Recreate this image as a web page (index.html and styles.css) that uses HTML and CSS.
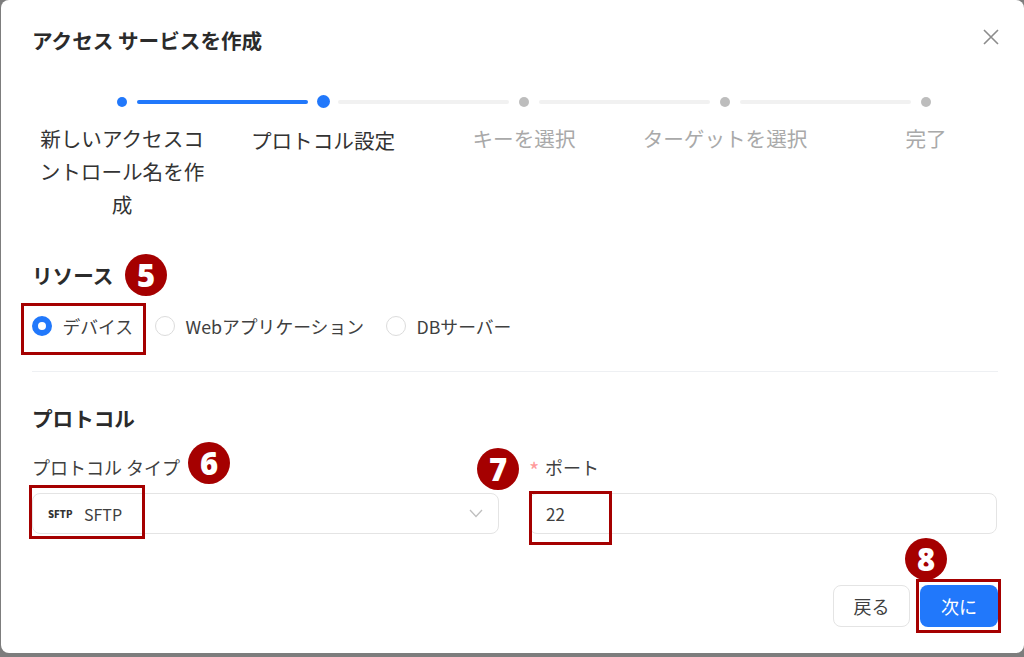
FILE: index.html
```html
<!DOCTYPE html>
<html lang="ja">
<head>
    <meta charset="utf-8">
    <title>アクセス サービスを作成</title>
    <link rel="stylesheet" href="styles.css">
</head>
<body>
    <div class="modal">
        <header class="modal-head">
            <h1>アクセス サービスを作成</h1>
            <svg class="close" width="18" height="18" viewBox="0 0 18 18"><path d="M2 2l14 14M16 2L2 16" fill="none" stroke="#8c8c8c" stroke-width="1.6"/></svg>
        </header>

        <div class="track">
            <span class="dot done"></span><span class="line done"></span>
            <span class="dot current"></span><span class="line"></span>
            <span class="dot"></span><span class="line"></span>
            <span class="dot"></span><span class="line"></span>
            <span class="dot"></span>
        </div>
        <div class="steps">
            <div class="step">新しいアクセスコントロール名を作成</div>
            <div class="step current">プロトコル設定</div>
            <div class="step todo">キーを選択</div>
            <div class="step todo">ターゲットを選択</div>
            <div class="step todo">完了</div>
        </div>

        <h2 class="section-title">リソース</h2>
        <div class="radios">
            <label class="radio checked"><span class="radio-mark"></span>デバイス</label>
            <label class="radio"><span class="radio-mark"></span>Webアプリケーション</label>
            <label class="radio"><span class="radio-mark"></span>DBサーバー</label>
        </div>
        <div class="divider"></div>

        <h2 class="section-title second">プロトコル</h2>
        <div class="fields">
            <div class="field">
                <div class="field-label">プロトコル タイプ</div>
                <div class="control">
                    <span class="proto-logo">SFTP</span>
                    <span class="proto-name">SFTP</span>
                    <svg class="chevron" width="14" height="9" viewBox="0 0 14 9"><path d="M1 1l6 6.5L13 1" fill="none" stroke="#bfbfbf" stroke-width="1.3"/></svg>
                </div>
            </div>
            <div class="field">
                <div class="field-label"><span class="required">*</span>ポート</div>
                <div class="control port">22</div>
            </div>
        </div>

        <footer class="modal-foot">
            <button class="btn back">戻る</button>
            <button class="btn primary">次に</button>
        </footer>
    </div>

    <!-- annotations on top of the screenshot -->
    <div class="mark mark-device"></div>
    <div class="mark mark-proto"></div>
    <div class="mark mark-port"></div>
    <div class="mark mark-next"></div>
    <div class="badge badge-5">5</div>
    <div class="badge badge-6">6</div>
    <div class="badge badge-7">7</div>
    <div class="badge badge-8">8</div>
</body>
</html>
```

FILE: styles.css
```css
* { box-sizing: border-box; }
body { position: relative; width: 1024px; height: 657px; margin: 0; overflow: hidden; background: #7d7d7d; color: #333; font-family: "Noto Sans CJK JP", "Noto Sans", sans-serif; }

.modal { width: 1023px; height: 653px; margin-left: 1px; padding: 26px 26px 0 31px; background: #fff; border-radius: 8px; overflow: hidden; }
.modal-head { display: flex; justify-content: space-between; align-items: center; height: 28px; }
.modal-head h1 { margin: 0; font-size: 20.6px; font-weight: 700; line-height: 28px; color: #2b2b2b; }
.close { margin-right: -2px; margin-top: -7px; }

.track { display: flex; align-items: center; gap: 10px; width: 814px; height: 13px; margin: 41px 0 0 85px; }
.dot { flex: none; width: 10px; height: 10px; border-radius: 50%; background: #bdbdbd; }
.dot.done { background: #2178fb; }
.dot.current { width: 13px; height: 13px; margin: 0 -2px 0 -1px; background: #2178fb; }
.line { flex: 1; height: 4px; margin-top: 1px; border-radius: 2px; background: #f1f1f1; }
.line.done { background: #2178fb; }

.steps { display: grid; grid-template-columns: repeat(5, 201px); margin: 14px 0 0 -10.5px; }
.step { padding: 0 17px; min-height: 99px; font-size: 20.6px; line-height: 33px; text-align: center; color: #333; }
.step.current { padding-top: 2px; }
.step.todo { color: #a9a9a9; }

.section-title { margin: 40px 0 0; font-size: 20.6px; font-weight: 700; line-height: 28px; color: #2b2b2b; }
.section-title.second { margin-top: 32px; }

.radios { display: flex; align-items: center; gap: 22px; height: 24px; margin-top: 25px; }
.radio { display: flex; align-items: center; gap: 10.5px; font-size: 17.8px; line-height: 24px; color: #404040; }
.radio-mark { width: 20px; height: 20px; border: 1px solid #dcdcdc; border-radius: 50%; background: #fff; }
.radio.checked .radio-mark { border: 6px solid #2178fb; }

.divider { height: 1px; margin-top: 33px; background: #eef0f3; }

.fields { display: grid; grid-template-columns: 467px 468px; gap: 30px; margin-top: 23px; }
.field-label { height: 25px; font-size: 18px; line-height: 25px; color: #404040; }
.required { display: inline-block; width: 16px; font-size: 22px; line-height: 20px; vertical-align: -4px; color: #ff9a9a; }
.control { display: flex; align-items: center; height: 41px; margin-top: 13px; padding: 0 16px; border: 1.5px solid #e4e4e4; border-radius: 8px; font-size: 17px; color: #404040; }
.proto-logo { width: 35px; margin-left: -1px; margin-right: 1px; font-size: 9.5px; font-weight: 900; color: #333; }
.proto-name { flex: 1; font-size: 16px; }
.chevron { margin-right: -1px; }

.modal-foot { display: flex; justify-content: flex-end; gap: 10px; margin-top: 51px; }
.btn { width: 78px; height: 42px; border: 1.5px solid #e4e4e4; border-radius: 8px; background: #fff; color: #404040; font-family: inherit; font-size: 18px; }
.btn.back { width: 77px; }
.btn.primary { border: none; background: #2178fb; color: #fff; }

.mark { position: absolute; border: 3px solid #a50000; }
.mark-device { left: 21px; top: 303px; width: 125px; height: 52px; }
.mark-proto { left: 29px; top: 485px; width: 116px; height: 54px; }
.mark-port { left: 529px; top: 491px; width: 83px; height: 54px; }
.mark-next { left: 916px; top: 579px; width: 85px; height: 54px; }

.badge { position: absolute; width: 42px; height: 42px; border-radius: 50%; background: #a50000; color: #fff; font-family: "Open Sans", sans-serif; font-size: 31px; font-weight: 800; line-height: 42px; text-align: center; }
.badge-5 { left: 125px; top: 254px; }
.badge-6 { left: 188px; top: 442px; }
.badge-7 { left: 477px; top: 448px; }
.badge-8 { left: 905px; top: 538px; }
```
